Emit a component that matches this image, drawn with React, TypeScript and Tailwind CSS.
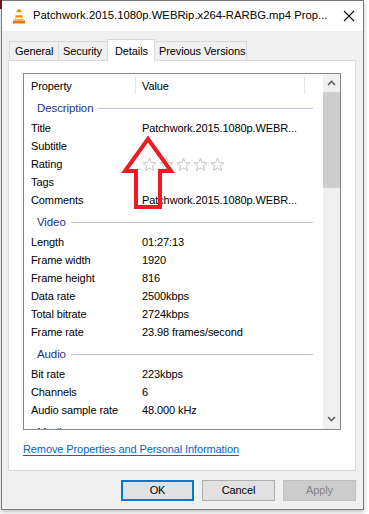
import React from 'react';

type Item =
  | { kind: 'group'; label: string }
  | { kind: 'row'; label: string; value?: string; stars?: boolean };

const items: Item[] = [
  { kind: 'group', label: 'Description' },
  { kind: 'row', label: 'Title', value: 'Patchwork.2015.1080p.WEBR...' },
  { kind: 'row', label: 'Subtitle' },
  { kind: 'row', label: 'Rating', stars: true },
  { kind: 'row', label: 'Tags' },
  { kind: 'row', label: 'Comments', value: 'Patchwork.2015.1080p.WEBR...' },
  { kind: 'group', label: 'Video' },
  { kind: 'row', label: 'Length', value: '01:27:13' },
  { kind: 'row', label: 'Frame width', value: '1920' },
  { kind: 'row', label: 'Frame height', value: '816' },
  { kind: 'row', label: 'Data rate', value: '2500kbps' },
  { kind: 'row', label: 'Total bitrate', value: '2724kbps' },
  { kind: 'row', label: 'Frame rate', value: '23.98 frames/second' },
  { kind: 'group', label: 'Audio' },
  { kind: 'row', label: 'Bit rate', value: '223kbps' },
  { kind: 'row', label: 'Channels', value: '6' },
  { kind: 'row', label: 'Audio sample rate', value: '48.000 kHz' },
  { kind: 'group', label: 'Media' },
];

function VlcIcon() {
  return (
    <svg className="shrink-0" width="14" height="17" viewBox="0 0 14 17">
      <path d="M5.3 1.5 L8.7 1.5 L11.6 12 L2.4 12 Z" fill="#f28a0c" />
      <path d="M4.6 4.2 L9.4 4.2 L10.2 7.2 L3.8 7.2 Z" fill="#fff" />
      <path d="M3.2 9.4 L10.8 9.4 L11.3 11.2 L2.7 11.2 Z" fill="#fff" opacity="0.9" />
      <path d="M1 12.5 L13 12.5 L13 15.5 L1 15.5 Z" fill="#e5760a" />
    </svg>
  );
}

function Star() {
  return (
    <svg width="15" height="15" viewBox="0 0 15 15">
      <path
        d="M7.5 1.2 L9.3 5.6 L14 5.8 L10.4 8.8 L11.6 13.5 L7.5 10.9 L3.4 13.5 L4.6 8.8 L1 5.8 L5.7 5.6 Z"
        fill="none"
        stroke="#c4c4c4"
        strokeWidth="1"
      />
    </svg>
  );
}

function Chevron({ up }: { up?: boolean }) {
  return (
    <svg width="9" height="6" viewBox="0 0 9 6">
      <path
        d={up ? 'M1 5 L4.5 1.5 L8 5' : 'M1 1 L4.5 4.5 L8 1'}
        fill="none"
        stroke="#606060"
        strokeWidth="1.6"
      />
    </svg>
  );
}

export default function App() {
  return (
    <div
      className="relative h-[514px] w-[369px] overflow-hidden bg-white text-[11px] tracking-[-0.1px] text-black"
      style={{ fontFamily: '"Liberation Sans", Arial, sans-serif' }}
    >
      <div className="absolute left-0 top-0 h-[9px] w-[2px] bg-[#6b1a1a]" />

      <div className="ml-[1px] flex h-[510px] w-[363px] flex-col border border-[#7a7a7a] shadow-[0_2px_4px_rgba(0,0,0,0.25)]">
        {/* title bar */}
        <div className="flex h-[30px] items-center bg-white pl-[10px] pr-[8px]">
          <VlcIcon />
          <span className="ml-[7px] whitespace-nowrap text-[11.3px] tracking-normal leading-none">
            Patchwork.2015.1080p.WEBRip.x264-RARBG.mp4 Prop...
          </span>
          <svg className="ml-auto shrink-0" width="12" height="12" viewBox="0 0 12 12">
            <path d="M1 1 L11 11 M11 1 L1 11" stroke="#111" strokeWidth="1.1" />
          </svg>
        </div>

        {/* body */}
        <div className="flex flex-1 flex-col bg-[#f0f0f0] pl-[6px] pr-[6px] pt-[8px]">
          <div className="ml-[1px] flex h-[21px] items-end whitespace-nowrap">
            <div className="flex h-[19px] w-[49px] items-center border-l border-t border-[#d9d9d9] pl-[5px]">General</div>
            <div className="flex h-[19px] w-[49px] items-center border-l border-t border-[#d9d9d9] pl-[4px]">Security</div>
            <div className="relative z-10 -mb-px flex h-[22px] w-[48px] items-start border-l border-r border-t border-[#d9d9d9] bg-white pl-[7px] pt-[3px]">
              Details
            </div>
            <div className="flex h-[19px] w-[92px] items-center border-r border-t border-[#d9d9d9] pl-[4px]">
              Previous Versions
            </div>
          </div>

          {/* panel */}
          <div className="flex h-[411px] w-[348px] flex-col border border-[#d9d9d9] bg-white px-[14px] pt-[12px]">
            <div className="relative flex h-[357px] w-[318px] overflow-hidden border border-[#828790]">
              <div className="flex-1 overflow-hidden">
                <div className="flex h-[21px] items-start pt-[3px] leading-[18px]">
                  <div className="w-[111px] pl-[7px]">Property</div>
                  <div className="h-[17px] w-px bg-[#e5e5e5]" />
                  <div className="w-[168px] pl-[6px]">Value</div>
                  <div className="h-[17px] w-px bg-[#e5e5e5]" />
                </div>
                {items.map((it) =>
                  it.kind === 'group' ? (
                    <div key={it.label} className="flex h-[24px] items-center pl-[13px] pr-[10px] pt-[2px] leading-[18px]">
                      <span className="text-[11.5px] text-[#1e3287]">{it.label}</span>
                      <div className="ml-[5px] h-px flex-1 bg-[#b7c0d8]" />
                    </div>
                  ) : (
                    <div key={it.label} className="flex h-[18px] items-center leading-[18px]">
                      <div className="w-[112px] whitespace-nowrap pl-[7px]">{it.label}</div>
                      <div className="flex-1 whitespace-nowrap pl-[6px]">
                        {it.stars ? (
                          <div className="flex gap-[2px] pt-[1px]">
                            <Star />
                            <Star />
                            <Star />
                            <Star />
                            <Star />
                          </div>
                        ) : (
                          it.value
                        )}
                      </div>
                    </div>
                  ),
                )}
              </div>
              {/* scrollbar */}
              <div className="flex w-[17px] flex-col bg-[#f0f0f0]">
                <div className="flex h-[18px] items-center justify-center">
                  <Chevron up />
                </div>
                <div className="h-[96px] bg-[#cdcdcd]" />
                <div className="flex-1" />
                <div className="flex h-[18px] items-center justify-center pb-[2px]">
                  <Chevron />
                </div>
              </div>
            </div>
            <div className="mt-[11px] leading-[16px] text-[#0066cc] underline underline-offset-2">
              Remove Properties and Personal Information
            </div>
          </div>

          {/* buttons */}
          <div className="mt-[9px] flex justify-end gap-[8px] pr-[1px]">
            <button className="h-[21px] w-[73px] border-2 border-[#0078d7] bg-[#e1e1e1] leading-none">OK</button>
            <button className="h-[21px] w-[73px] border border-[#adadad] bg-[#e1e1e1] leading-none">Cancel</button>
            <button className="h-[21px] w-[73px] border border-[#bfbfbf] bg-[#cccccc] leading-none text-[#838383]">Apply</button>
          </div>
        </div>
      </div>

      {/* red annotation arrow */}
      <svg className="absolute left-0 top-0" width="369" height="514" viewBox="0 0 369 514">
        <polygon
          points="148,139 171,171 160,171 160,207 136,207 136,171 125,171"
          fill="none"
          stroke="#ed1c24"
          strokeWidth="4"
          strokeLinejoin="miter"
        />
      </svg>
    </div>
  );
}
